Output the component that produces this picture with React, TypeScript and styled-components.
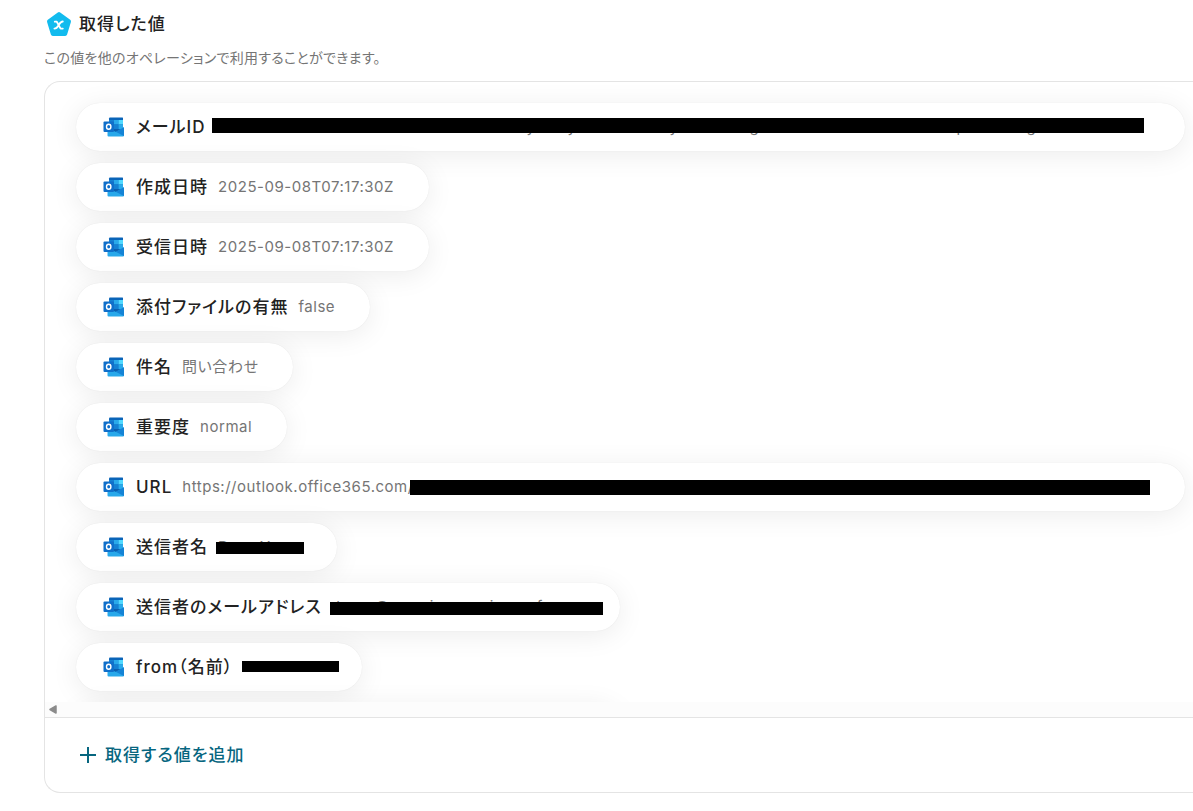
import React from "react";
import styled, { createGlobalStyle } from "styled-components";

const GlobalStyle = createGlobalStyle`
  *, *::before, *::after { box-sizing: border-box; }
  body {
    margin: 0;
    background: #fff;
    color: #222;
    font-family: Inter, "Noto Sans CJK JP", sans-serif;
    font-feature-settings: "palt";
  }
`;

const Page = styled.main`
  padding: 8px 0 16px 44px;
  overflow: hidden;
`;

const Header = styled.header`
  display: flex;
  align-items: center;
  gap: 5px;
  height: 32px;
`;

const Title = styled.h1`
  margin: 0;
  font-size: 17px;
  line-height: 24px;
  font-weight: 500;
  letter-spacing: 0.06em;
`;

const Description = styled.p`
  margin: 8px 0 13px;
  font-size: 14px;
  line-height: 20px;
  letter-spacing: 0.02em;
  color: #757575;
`;

const Panel = styled.section`
  border: 1px solid #e4e4e4;
  border-right: 0;
  border-radius: 16px 0 0 16px;
  overflow: hidden;
`;

const List = styled.ul`
  display: flex;
  flex-direction: column;
  align-items: flex-start;
  gap: 12px;
  height: 620px;
  margin: 0;
  padding: 21px 8px 0 31px;
  overflow: hidden;
  list-style: none;
`;

const Pill = styled.li<{ $wide?: boolean }>`
  display: flex;
  flex: none;
  align-items: center;
  width: ${(p) => (p.$wide ? "100%" : "auto")};
  height: 48px;
  padding: 0 35px 0 27px;
  border-radius: 24px;
  background: #fff;
  box-shadow: 0 0 1px rgba(0, 0, 0, 0.1), 0 4px 28px rgba(0, 0, 0, 0.08);
`;

const BlankPill = styled(Pill)`
  width: 544px;
`;

const Label = styled.span`
  margin-left: 11px;
  font-size: 17px;
  line-height: 24px;
  font-weight: 500;
  letter-spacing: 0.06em;
  white-space: nowrap;
`;

const Value = styled.span`
  margin-left: 10px;
  font-size: 15px;
  line-height: 24px;
  letter-spacing: 0.035em;
  color: #757575;
  white-space: nowrap;
`;

const Redacted = styled.span<{ $width?: number; $gap: number }>`
  position: relative;
  flex: ${(p) => (p.$width ? "none" : "1")};
  width: ${(p) => (p.$width ? `${p.$width}px` : "auto")};
  height: 24px;
  margin-left: ${(p) => p.$gap}px;
  font-size: 15px;
  line-height: 24px;
  color: #757575;
  white-space: nowrap;
`;

const Bar = styled.span<{ $top: number; $height: number; $right: number }>`
  position: absolute;
  left: 0;
  right: ${(p) => p.$right}px;
  top: ${(p) => p.$top}px;
  height: ${(p) => p.$height}px;
  background: #000;
`;

const Glyph = styled.span<{ $before: number }>`
  display: inline-block;
  width: ${(p) => p.$before + 10}px;
  padding-left: ${(p) => p.$before}px;
`;

const ScrollTrack = styled.div`
  display: flex;
  align-items: center;
  height: 15px;
  padding-left: 4px;
  background: #fcfcfc;
`;

const Footer = styled.footer`
  display: flex;
  align-items: center;
  height: 75px;
  padding-left: 34px;
  border-top: 1px solid #e4e4e4;
`;

const AddButton = styled.button`
  display: flex;
  align-items: center;
  gap: 8px;
  padding: 0;
  border: 0;
  background: none;
  color: #07667f;
  font: inherit;
  font-size: 17px;
  line-height: 24px;
  font-weight: 500;
  letter-spacing: 0.06em;
  cursor: pointer;
`;

function PentagonIcon() {
  return (
    <svg width="30" height="32" viewBox="0 0 30 32" aria-hidden="true">
      <path
        d="M15 6 L25 13.4 L21.2 26 H8.8 L5 13.4 Z"
        fill="#12bbee"
        stroke="#12bbee"
        strokeWidth="4"
        strokeLinejoin="round"
      />
      <path
        d="M10.8 13.7 H12.8 L16.6 20.6 H18.8 M18.8 13.5 C16.6 13.5 15.6 15.6 14.6 17.2 C13.6 18.9 12.6 20.6 10.4 20.6"
        fill="none"
        stroke="#fff"
        strokeWidth="1.8"
        strokeLinecap="round"
        strokeLinejoin="round"
      />
    </svg>
  );
}

function OutlookIcon() {
  return (
    <svg width="22" height="20" viewBox="0 0 22 20" aria-hidden="true">
      <path d="M7 0.5 H19.5 Q20 0.5 20 1 V15 H6 V1.5 Q6 0.5 7 0.5Z" fill="#0a64b8" />
      <path d="M6 3 H11 V7.5 H6Z" fill="#1480d2" />
      <path d="M11 3 H15.5 V7.5 H11Z" fill="#29a9ea" />
      <path d="M15.5 3 H20 V7.5 H15.5Z" fill="#50d9ff" />
      <path d="M11 7.5 H15.5 V12 H11Z" fill="#1480d2" />
      <path d="M15.5 7.5 H20 V12 H15.5Z" fill="#29a9ea" />
      <path d="M11 12 H15.5 V15 H11Z" fill="#0a5fae" />
      <path d="M4.5 11 L13 15 L21 10.2 V18.5 Q21 19.5 20 19.5 H5.5 Q4.5 19.5 4.5 18.5Z" fill="#28a8ea" />
      <path d="M12.6 14.8 L21 19 V10.2Z" fill="#1583d5" />
      <rect x="0.5" y="4.5" width="10.5" height="10.5" rx="1" fill="#0f6fca" />
      <ellipse cx="5.7" cy="9.7" rx="2.2" ry="2.5" fill="none" stroke="#fff" strokeWidth="1.4" />
    </svg>
  );
}

type Fragment = [before: number, glyph: string];

type Row = {
  label: string;
  value?: string;
  wide?: boolean;
  redaction?: {
    gap: number;
    width?: number;
    top: number;
    height: number;
    right: number;
    fragments: Fragment[];
  };
};

const rows: Row[] = [
  {
    label: "メールID",
    wide: true,
    redaction: {
      gap: 6,
      top: 3,
      height: 15,
      right: 6,
      fragments: [[315, "y"], [31, "y"], [92, "y"], [70, "g"], [197, "p"], [60, "g"]],
    },
  },
  { label: "作成日時", value: "2025-09-08T07:17:30Z" },
  { label: "受信日時", value: "2025-09-08T07:17:30Z" },
  { label: "添付ファイルの有無", value: "false" },
  { label: "件名", value: "問い合わせ" },
  { label: "重要度", value: "normal" },
  {
    label: "URL",
    value: "https://outlook.office365.com/",
    wide: true,
    redaction: { gap: -4, top: 5, height: 15, right: 0, fragments: [] },
  },
  {
    label: "送信者名",
    redaction: { gap: 8, width: 86, top: 7, height: 12, right: -2, fragments: [[2, "D"], [32, "Y"]] },
  },
  {
    label: "送信者のメールアドレス",
    redaction: {
      gap: 8,
      width: 255,
      top: 7,
      height: 13,
      right: -18,
      fragments: [[1, "d"], [34, "@"], [45, "i"], [50, "i"], [37, "f"]],
    },
  },
  {
    label: "from（名前）",
    redaction: { gap: 9, width: 85, top: 6, height: 11, right: -12, fragments: [[2, "D"]] },
  },
];

function ValueRow({ label, value, wide, redaction }: Row) {
  return (
    <Pill $wide={wide}>
      <OutlookIcon />
      <Label>{label}</Label>
      {value && <Value>{value}</Value>}
      {redaction && (
        <Redacted $width={redaction.width} $gap={redaction.gap}>
          {redaction.fragments.map(([before, glyph], i) => (
            <Glyph key={i} $before={before}>
              {glyph}
            </Glyph>
          ))}
          <Bar $top={redaction.top} $height={redaction.height} $right={redaction.right} />
        </Redacted>
      )}
    </Pill>
  );
}

export default function App() {
  return (
    <>
      <GlobalStyle />
      <Page>
        <Header>
          <PentagonIcon />
          <Title>取得した値</Title>
        </Header>
        <Description>この値を他のオペレーションで利用することができます。</Description>
        <Panel>
          <List>
            {rows.map((row) => (
              <ValueRow key={row.label} {...row} />
            ))}
            <BlankPill aria-hidden="true" />
          </List>
          <ScrollTrack>
            <svg width="8" height="9" viewBox="0 0 8 9" aria-hidden="true">
              <path d="M7 1 V8 L1 4.5 Z" fill="#8b8b8b" stroke="#8b8b8b" strokeWidth="1.5" strokeLinejoin="round" />
            </svg>
          </ScrollTrack>
          <Footer>
            <AddButton type="button">
              <svg width="18" height="18" viewBox="0 0 18 18" aria-hidden="true">
                <path d="M9 1 V17 M1 9 H17" stroke="currentColor" strokeWidth="2" />
              </svg>
              取得する値を追加
            </AddButton>
          </Footer>
        </Panel>
      </Page>
    </>
  );
}
